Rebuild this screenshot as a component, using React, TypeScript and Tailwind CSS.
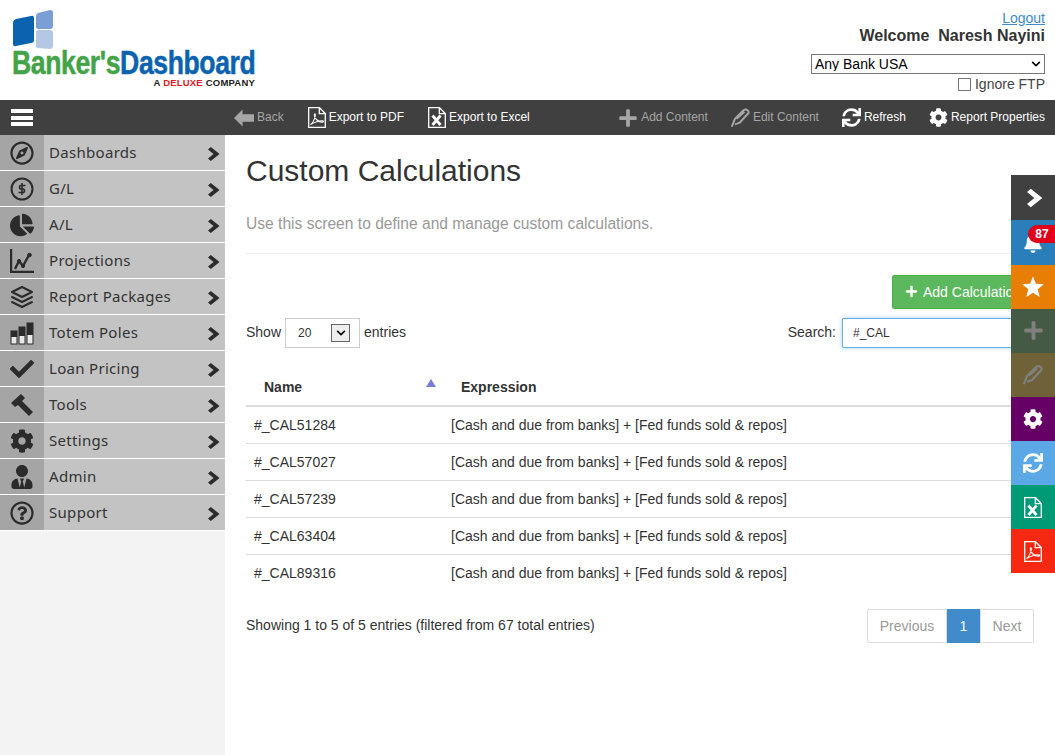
import React from "react";
import { IconType } from "react-icons";
import {
  FaBell,
  FaChartPie,
  FaCheck,
  FaChevronDown,
  FaCog,
  FaPlus,
  FaRegCompass,
  FaRegQuestionCircle,
  FaSync,
  FaUserTie,
} from "react-icons/fa";
import { FiLayers } from "react-icons/fi";

const Dollar: IconType = (props) => (
  <svg viewBox="0 0 24 24" fill="none" stroke="currentColor" {...props}>
    <circle cx="12" cy="12" r="10.5" strokeWidth="2" />
    <path d="M15.5 8.5h-5a2 2 0 0 0 0 3.5h3a2 2 0 0 1 0 3.5h-5M12 6v12" strokeWidth="1.6" />
  </svg>
);

const Totem: IconType = (props) => (
  <svg viewBox="0 0 24 24" {...props}>
    <rect x="1" y="10" width="6" height="13" fill="#e8e8e8" stroke="currentColor" />
    <rect x="9" y="6" width="6" height="17" fill="#e8e8e8" stroke="currentColor" />
    <rect x="17" y="2" width="6" height="21" fill="#e8e8e8" stroke="currentColor" />
    <rect x="1" y="10" width="6" height="6" fill="currentColor" />
    <rect x="9" y="6" width="6" height="9" fill="currentColor" />
    <rect x="17" y="2" width="6" height="12" fill="currentColor" />
  </svg>
);

const Projections: IconType = (props) => (
  <svg viewBox="0 0 24 24" fill="none" stroke="currentColor" {...props}>
    <path d="M1 0v23h23" strokeWidth="2.4" />
    <path d="M5 20l4-8 4 5 6-11" strokeWidth="2.4" />
    <circle cx="19.5" cy="6" r="1.8" fill="currentColor" />
    <circle cx="9" cy="12" r="1.6" fill="currentColor" />
    <circle cx="13" cy="17" r="1.6" fill="currentColor" />
  </svg>
);

const Hammer: IconType = (props) => (
  <svg viewBox="0 0 24 24" fill="currentColor" {...props}>
    <path d="M1 10L11 1l4 4-3 3 11 11-4 4L8 12l-3 2z" />
  </svg>
);

const Chevron: IconType = (props) => (
  <svg viewBox="0 0 12 14" fill="currentColor" {...props}>
    <path d="M0 2.5L2.8 0 11.5 7l-8.700 7L0 11.500 5.500 7z" />
  </svg>
);

const BackArrow: IconType = (props) => (
  <svg viewBox="0 0 21 18" fill="currentColor" {...props}>
    <path d="M0 9l9-9v5h12v8H9v5z" />
  </svg>
);

const Star: IconType = (props) => (
  <svg viewBox="0 0 24 24" fill="currentColor" {...props}>
    <path d="M12 .5l3.200 8 8.600.5-6.700 5.500 2.200 8.400L12 18.200l-7.300 4.700 2.200-8.400L.2 9l8.600-.5z" />
  </svg>
);

const Feather: IconType = (props) => (
  <svg viewBox="0 0 24 24" fill="none" stroke="currentColor" strokeWidth="2.500" {...props}>
    <path d="M1 23l4-10L16 2c4-2 7 1 6 4L11 18l-6 2M7 13L17 4M11 18l8-9" />
  </svg>
);

const PdfPage: IconType = (props) => (
  <svg viewBox="0 0 18 21" fill="none" stroke="currentColor" strokeWidth="1.300" {...props}>
    <path d="M.7.7h10.800l5.800 5.800v13.800H.7zM11.300.7v6h6" />
    <path d="M2.500 17.500c2-1 3.800-4.500 4.800-9 .3-2-1-2.200-1-.6 0 3.200 3.500 7.300 8.200 7.200 1.800 0 1.600-1.400-.3-1.400-3.300 0-7 1.200-11.700 3.800z" strokeWidth="1.100" />
  </svg>
);

const ExcelPage: IconType = (props) => (
  <svg viewBox="0 0 18 21" fill="none" stroke="currentColor" strokeWidth="1.300" {...props}>
    <path d="M.7.7h10.800l5.800 5.800v13.800H.7zM11.300.7v6h6" />
    <path d="M4.500 8.500l8 9.500M12.500 8.500l-8 9.500" strokeWidth="2.800" />
  </svg>
);

const menu: [string, IconType][] = [
  ["Dashboards", FaRegCompass],
  ["G/L", Dollar],
  ["A/L", FaChartPie],
  ["Projections", Projections],
  ["Report Packages", FiLayers],
  ["Totem Poles", Totem],
  ["Loan Pricing", FaCheck],
  ["Tools", Hammer],
  ["Settings", FaCog],
  ["Admin", FaUserTie],
  ["Support", FaRegQuestionCircle],
];

const ToolItem = ({ Icon, label, dim, size }: { Icon: IconType; label: string; dim?: boolean; size: string }) => (
  <div className={`flex items-center gap-[3px] ${dim ? "text-[#a6a6a6]" : "text-white"}`}>
    <Icon className={size} />
    <span className="mb-[1px] text-xs">{label}</span>
  </div>
);

const SideTab = ({ color, h, children }: { color: string; h: string; children: React.ReactNode }) => (
  <div className={`relative flex items-center justify-center text-white ${color} ${h}`}>{children}</div>
);

const rows = ["#_CAL51284", "#_CAL57027", "#_CAL57239", "#_CAL63404", "#_CAL89316"];

export default function App() {
  return (
    <div className="relative h-[755px] overflow-hidden bg-white font-['Liberation_Sans',sans-serif] text-sm text-[#333]">
      {/* Header */}
      <header className="flex h-[100px] justify-between">
        <div className="pl-3 pt-[10px]">
          <svg viewBox="0 0 41 39" className="h-[39px] w-[41px]">
            <path d="M1 13q0-3 3-4l15-3q3-1 3 2v22q0 3-3 3L4 36q-3 1-3-2z" fill="#0b63b0" />
            <path d="M24 6q0-2 2-3l12-3q3 0 3 2v14q0 3-3 3H26q-2 0-2-2z" fill="#7b9fd4" />
            <path d="M24 22q0-2 2-2h12q3 0 3 3v13q0 3-3 3l-12-1q-2 0-2-2z" fill="#b4c8e6" />
          </svg>
          <div className="flex h-[27px] w-[243px] origin-left scale-x-[0.806] items-center whitespace-nowrap text-[33px] font-bold leading-none tracking-[-0.5px] [-webkit-text-stroke:0.5px_currentColor]">
            <span className="text-[#43a447]">Banker's</span>
            <span className="text-[#0b63b0]">Dashboard</span>
          </div>
          <div className="mt-[2px] w-[243px] text-right text-[9.5px] font-bold leading-[10px] tracking-[0.2px] text-[#222]">
            A <span className="text-[#e01b24]">DELUXE</span> COMPANY
          </div>
        </div>
        <div className="flex w-[300px] flex-col items-end pr-[10px] pt-[10px]">
          <a className="text-sm leading-[16px] text-[#428bca] underline">Logout</a>
          <div className="whitespace-pre text-base font-bold leading-[19px]">Welcome  Naresh Nayini</div>
          <div className="relative mt-[9px] h-[20px] w-[234px]">
            <select className="h-full w-full appearance-none border border-[#767676] bg-white pl-[3px] text-sm leading-none text-black">
              <option>Any Bank USA</option>
            </select>
            <FaChevronDown className="absolute right-[3px] top-[5px] h-[10px] w-[12px] text-black" />
          </div>
          <label className="mt-[2px] flex items-center gap-[4px] leading-[16px] text-[#444]">
            <span className="h-[13px] w-[13px] border border-[#767676] bg-white" />
            Ignore FTP
          </label>
        </div>
      </header>

      {/* Toolbar */}
      <div className="flex h-[35px] items-center justify-between bg-[#404040] pr-[10px]">
        <div className="flex items-center">
          <div className="flex w-[234px] justify-start pl-[11px]">
            <div className="flex h-[17px] w-[22px] flex-col justify-between">
              <span className="h-[4px] bg-white" />
              <span className="h-[4px] bg-white" />
              <span className="h-[4px] bg-white" />
            </div>
          </div>
          <div className="flex items-center gap-[24px]">
            <ToolItem Icon={BackArrow} label="Back" dim size="h-[18px] w-[20px]" />
            <ToolItem Icon={PdfPage} label="Export to PDF" size="h-[21px] w-[18px]" />
            <ToolItem Icon={ExcelPage} label="Export to Excel" size="h-[21px] w-[18px]" />
          </div>
        </div>
        <div className="flex items-center gap-[23px]">
          <ToolItem Icon={FaPlus} label="Add Content" dim size="h-[20px] w-[20px]" />
          <ToolItem Icon={Feather} label="Edit Content" dim size="h-[20px] w-[19px]" />
          <ToolItem Icon={FaSync} label="Refresh" size="h-[19px] w-[19px]" />
          <ToolItem Icon={FaCog} label="Report Properties" size="h-[19px] w-[19px]" />
        </div>
      </div>

      <div className="flex h-[620px]">
        {/* Sidebar */}
        <nav className="w-[225px] shrink-0 bg-[#f3f3f3]">
          {menu.map(([label, Icon]) => (
            <div key={label} className="flex h-[36px] border-b-[1px] border-white bg-[#c3c3c3] text-[#333]">
              <div className="flex w-[44px] items-center justify-center bg-[#a5a5a5]">
                <Icon className="h-[24px] w-[24px] text-[#2b2b2b]" />
              </div>
              <span className="flex-1 pl-[5px] font-['Noto_Sans',sans-serif] text-[15px] leading-[34px] tracking-[0.3px]">
                {label}
              </span>
              <div className="flex w-[17px] items-center">
                <Chevron className="mt-[3px] h-[14px] w-[12px] text-[#2b2b2b]" />
              </div>
            </div>
          ))}
        </nav>

        {/* Main content */}
        <main className="w-[830px] shrink-0 pl-[21px] pr-[21px]">
          <h1 className="mt-[18px] text-[30px] font-normal leading-[36px] text-[#333]">Custom Calculations</h1>
          <p className="mt-[26px] text-[15.6px] leading-[18px] text-[#999]">
            Use this screen to define and manage custom calculations.
          </p>
          <hr className="mt-[20px] border-[#eee]" />

          <div className="mt-[21px] flex justify-end">
            <button className="-mr-[20px] flex h-[34px] w-[162px] items-center gap-[5px] whitespace-nowrap rounded-[2px] border border-[#4cae4c] bg-[#5cb85c] pb-[1px] pl-[12px] text-sm text-white">
              <FaPlus className="h-[13px] w-[13px]" />
              Add Calculation
            </button>
          </div>

          <div className="mt-[9px] flex h-[30px] items-center justify-between">
            <div className="flex items-center gap-[4px]">
              <span className="mb-[2px]">Show</span>
              <div className="flex h-[30px] w-[75px] items-center border border-[#ccc] pl-[12px] text-xs">
                <span className="mb-[1px] w-[33px]">20</span>
                <span className="flex h-[18px] w-[19px] items-center justify-center border border-[#666] bg-[#eee]">
                  <FaChevronDown className="h-[10px] w-[10px] text-black" />
                </span>
              </div>
              <span className="mb-[2px]">entries</span>
            </div>
            <div className="flex items-center gap-[6px]">
              <span className="mb-[2px]">Search:</span>
              <div className="flex h-[30px] w-[192px] items-center justify-between rounded-[1px] border border-[#66afe9] px-[10px] pb-[1px] text-xs shadow-[0_0_4px_rgba(102,175,233,0.6)]">
                #_CAL
                <span className="text-[#8a6d3b]">×</span>
              </div>
            </div>
          </div>

          <table className="mt-[20px] w-full table-fixed border-collapse">
            <thead>
              <tr className="h-[38px] border-b-2 border-[#ddd]">
                <th className="relative w-[197px] pl-[18px] text-left font-bold">
                  Name
                  <span className="absolute right-[7px] top-[11px] h-0 w-0 border-x-[5px] border-b-[8px] border-x-transparent border-b-[#7a7ad8]" />
                </th>
                <th className="pl-[18px] text-left font-bold">Expression</th>
              </tr>
            </thead>
            <tbody>
              {rows.map((name, i) => (
                <tr key={name} className={`h-[37px] ${i < rows.length - 1 ? "border-b border-[#ddd]" : ""}`}>
                  <td className="pl-[8px]">{name}</td>
                  <td className="pl-[8px]">[Cash and due from banks] + [Fed funds sold &amp; repos]</td>
                </tr>
              ))}
            </tbody>
          </table>

          <div className="mt-[18px] flex items-start justify-between">
            <span className="mt-[6px]">Showing 1 to 5 of 5 entries (filtered from 67 total entries)</span>
            <div className="flex h-[34px] items-stretch text-[#999]">
              <span className="flex w-[80px] items-center justify-center rounded-l-[2px] border border-[#ddd]">Previous</span>
              <span className="flex w-[33px] items-center justify-center bg-[#428bca] text-white">1</span>
              <span className="flex w-[54px] items-center justify-center rounded-r-[2px] border border-[#ddd]">Next</span>
            </div>
          </div>
        </main>
      </div>

      {/* Floating side tabs */}
      <div className="absolute right-0 top-[175px] w-[44px]">
        <SideTab color="bg-[#404040]" h="h-[45px]">
          <Chevron className="ml-[3px] h-[20px] w-[16px]" />
        </SideTab>
        <SideTab color="bg-[#2a7fba]" h="h-[45px]">
          <FaBell className="h-[20px] w-[18px]" />
          <span className="absolute left-[17px] top-[5px] flex h-[18px] w-[28px] items-center justify-center rounded-l-[9px] bg-[#e2001a] text-xs font-bold">
            87
          </span>
        </SideTab>
        <SideTab color="bg-[#e87e04]" h="h-[44px]">
          <Star className="h-[22px] w-[22px]" />
        </SideTab>
        <SideTab color="bg-[#445a44]" h="h-[44px]">
          <FaPlus className="mb-[2px] h-[21px] w-[21px] text-[#808080]" />
        </SideTab>
        <SideTab color="bg-[#6f6238]" h="h-[44px]">
          <Feather className="h-[20px] w-[20px] text-[#808080]" />
        </SideTab>
        <SideTab color="bg-[#660066]" h="h-[44px]">
          <FaCog className="h-[20px] w-[20px]" />
        </SideTab>
        <SideTab color="bg-[#5aa9e6]" h="h-[44px]">
          <FaSync className="h-[20px] w-[20px]" />
        </SideTab>
        <SideTab color="bg-[#009a77]" h="h-[44px]">
          <ExcelPage className="h-[21px] w-[18px]" />
        </SideTab>
        <SideTab color="bg-[#f52812]" h="h-[44px]">
          <PdfPage className="h-[21px] w-[18px]" />
        </SideTab>
      </div>
    </div>
  );
}
